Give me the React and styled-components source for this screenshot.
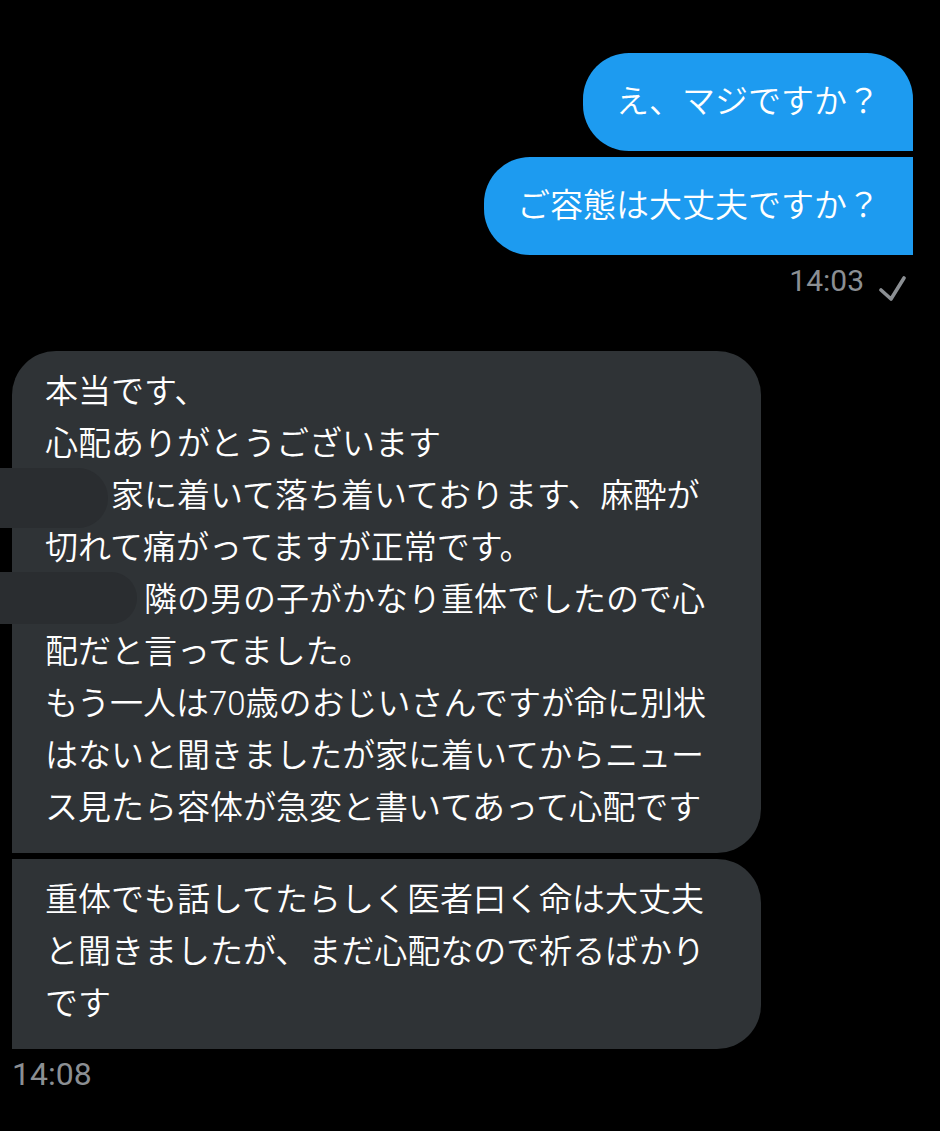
import React from "react";
import styled, { createGlobalStyle } from "styled-components";

const Global = createGlobalStyle`
  html, body {
    margin: 0;
    padding: 0;
    background: #000;
  }
  #root {
    min-height: 1131px;
    background: #000;
  }
`;

const Page = styled.div`
  box-sizing: border-box;
  width: 940px;
  min-height: 1131px;
  padding: 53px 27px 0 12px;
  background: #000;
  font-family: Roboto, "Noto Sans CJK JP", sans-serif;
  font-weight: 350;
  color: #fff;
  display: flex;
  flex-direction: column;
`;

const SentGroup = styled.div`
  display: flex;
  flex-direction: column;
  align-items: flex-end;
  gap: 6px;
`;

const SentBubble = styled.div`
  box-sizing: border-box;
  background: #1d9bf0;
  color: #fff;
  font-size: 33px;
  line-height: 52px;
  padding: 23px 33px;
  border-radius: ${(p) =>
    p.$pos === "first" ? "46px 46px 0 46px" : "46px 0 0 46px"};
  white-space: nowrap;
`;

const MetaRow = styled.div`
  display: flex;
  justify-content: flex-end;
  align-items: flex-start;
  gap: 14px;
  margin-top: 8px;
  padding-right: 7px;
`;

const Time = styled.div`
  font-family: Roboto, "Liberation Sans", sans-serif;
  font-weight: 400;
  font-size: ${(p) => p.$size}px;
  line-height: 36px;
  color: #8b8f93;
`;

const Check = styled.svg`
  margin-top: 12px;
  flex: none;
`;

const ReceivedGroup = styled.div`
  position: relative;
  margin-top: 50px;
  display: flex;
  flex-direction: column;
  gap: 6px;
`;

const ReceivedBubble = styled.div`
  box-sizing: border-box;
  width: 749px;
  background: #2f3336;
  color: #fff;
  font-size: 33px;
  line-height: 52px;
  padding: 15px 33px 19px 33px;
  border-radius: ${(p) =>
    p.$pos === "first" ? "44px 44px 44px 0" : "0 44px 44px 0"};
  white-space: pre-wrap;
  word-break: normal;
  line-break: strict;
`;

const Redaction = styled.div`
  position: absolute;
  left: -12px;
  top: ${(p) => p.$top}px;
  width: ${(p) => p.$width}px;
  height: ${(p) => p.$height}px;
  background: #2a2d30;
  border-radius: 0 ${(p) => p.$height / 2}px ${(p) => p.$height / 2}px 0;
`;

const ReceivedTime = styled(Time)`
  margin-top: 6px;
  line-height: 38px;
`;

export default function App() {
  const msg1 =
    "本当です、\n心配ありがとうございます\n\u3000\u3000家に着いて落ち着いております、麻酔が切れて痛がってますが正常です。\n\u3000\u3000\u3000隣の男の子がかなり重体でしたので心配だと言ってました。\nもう一人は70歳のおじいさんですが命に別状はないと聞きましたが家に着いてからニュース見たら容体が急変と書いてあって心配です";
  const msg2 =
    "重体でも話してたらしく医者曰く命は大丈夫と聞きましたが、まだ心配なので祈るばかりです";
  return (
    <>
      <Global />
      <Page>
        <SentGroup>
          <SentBubble $pos="first">え、マジですか？</SentBubble>
          <SentBubble $pos="last">ご容態は大丈夫ですか？</SentBubble>
        </SentGroup>
        <MetaRow>
          <Time $size={30}>14:03</Time>
          <Check width="28" height="26" viewBox="0 0 28 26">
            <path
              d="M3 15 L13 24 L26 3"
              fill="none"
              stroke="#8b8f93"
              strokeWidth="3.6"
              strokeLinecap="round"
              strokeLinejoin="round"
            />
          </Check>
        </MetaRow>
        <ReceivedGroup>
          <ReceivedBubble $pos="first">{msg1}</ReceivedBubble>
          <ReceivedBubble $pos="last">{msg2}</ReceivedBubble>
          <Redaction $top={117} $width={108} $height={60} />
          <Redaction $top={221} $width={137} $height={52} />
        </ReceivedGroup>
        <ReceivedTime $size={32}>14:08</ReceivedTime>
      </Page>
    </>
  );
}
